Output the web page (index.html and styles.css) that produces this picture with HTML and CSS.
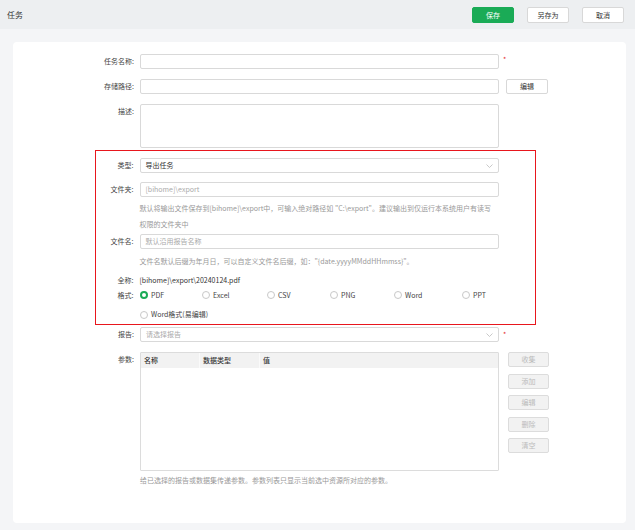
FILE: index.html
```html
<!DOCTYPE html>
<html lang="zh-CN">
<head>
<meta charset="utf-8">
<title>任务</title>
<link rel="stylesheet" href="styles.css">
</head>
<body>
<header class="topbar">
  <div class="title">任务</div>
  <div class="actions">
    <button class="btn btn-primary">保存</button>
    <button class="btn">另存为</button>
    <button class="btn">取消</button>
  </div>
</header>
<main class="card">
  <div class="form">
    <div class="row r-name">
      <span class="lbl">任务名称:</span>
      <div class="field"></div>
      <span class="req req-top">*</span>
    </div>
    <div class="row r-path">
      <span class="lbl">存储路径:</span>
      <div class="field"></div>
      <button class="btn side-btn">编辑</button>
    </div>
    <div class="row r-desc">
      <span class="lbl">描述:</span>
      <div class="field area"></div>
    </div>

    <section class="highlight">
      <div class="row r-type">
        <span class="lbl">类型:</span>
        <div class="field select"><span class="val">导出任务</span>
          <svg class="chev" width="7" height="4" viewBox="0 0 7 4"><polyline points="0.5,0.5 3.5,3.5 6.5,0.5" fill="none" stroke="#bbb" stroke-width="0.8"/></svg>
        </div>
      </div>
      <div class="row r-folder">
        <span class="lbl">文件夹:</span>
        <div class="field"><span class="ph">[bihome]\export</span></div>
      </div>
      <p class="help h-folder">默认将输出文件保存到[bihome]\export中，可输入绝对路径如 "C:\export"。建议输出到仅运行本系统用户有读写<br>权限的文件夹中</p>
      <div class="row r-file">
        <span class="lbl">文件名:</span>
        <div class="field"><span class="ph">默认沿用报告名称</span></div>
      </div>
      <p class="help h-file">文件名默认后缀为年月日，可以自定义文件名后缀，如："{date.yyyyMMddHHmmss}"。</p>
      <div class="row r-full">
        <span class="lbl">全称:</span>
        <span class="text">[bihome]\export\20240124.pdf</span>
      </div>
      <div class="row r-format">
        <span class="lbl">格式:</span>
        <div class="radios">
          <span class="radio on"><i></i>PDF</span>
          <span class="radio"><i></i>Excel</span>
          <span class="radio"><i></i>CSV</span>
          <span class="radio"><i></i>PNG</span>
          <span class="radio"><i></i>Word</span>
          <span class="radio"><i></i>PPT</span>
          <span class="radio wide"><i></i>Word格式(易编辑)</span>
        </div>
      </div>
    </section>

    <div class="row r-report">
      <span class="lbl">报告:</span>
      <div class="field select"><span class="ph">请选择报告</span>
        <svg class="chev" width="7" height="4" viewBox="0 0 7 4"><polyline points="0.5,0.5 3.5,3.5 6.5,0.5" fill="none" stroke="#bbb" stroke-width="0.8"/></svg>
      </div>
      <span class="req">*</span>
    </div>
    <div class="row r-params">
      <span class="lbl">参数:</span>
      <div class="table">
        <div class="thead">
          <span class="c1">名称</span>
          <span class="c2">数据类型</span>
          <span class="c3">值</span>
        </div>
      </div>
      <div class="tbtns">
        <button class="btn dis">收集</button>
        <button class="btn dis">添加</button>
        <button class="btn dis">编辑</button>
        <button class="btn dis">删除</button>
        <button class="btn dis">清空</button>
      </div>
    </div>
    <p class="help h-params">给已选择的报告或数据集传递参数。参数列表只显示当前选中资源所对应的参数。</p>
  </div>
</main>
</body>
</html>
```
FILE: styles.css
```css
* { box-sizing: border-box; }
html, body { margin: 0; padding: 0; }
body {
  background: #f4f5f7;
  font-family: "Noto Sans CJK SC", "Noto Sans", sans-serif;
  font-size: 7px;
  color: #333;
  width: 635px;
  height: 530px;
  overflow: hidden;
}
.topbar {
  height: 29px;
  background: #edeff1;
  display: flex;
  align-items: center;
  justify-content: space-between;
  padding: 0 11px 0 7px;
}
.title { font-size: 8px; color: #333; }
.actions { display: flex; gap: 13px; }
.btn {
  font-family: inherit;
  font-size: 7px;
  width: 42px;
  height: 16px;
  padding: 0;
  border: 1px solid #d8d8d8;
  border-radius: 2px;
  background: #fff;
  color: #333;
  line-height: 14px;
}
.btn-primary { background: #1aab56; border-color: #1aab56; color: #fff; }
.card {
  margin: 13px 9px 0 13px;
  width: 613px;
  height: 481px;
  background: #fff;
  border-radius: 4px;
}
.form { --lw: 121px; padding-top: 12px; }
.row { display: flex; align-items: flex-start; }
.lbl {
  flex: none;
  width: var(--lw);
  margin-right: 6px;
  text-align: right;
  line-height: 15px;
  color: #444;
}
.field {
  flex: none;
  width: 359px;
  height: 15px;
  border: 1px solid #d9d9d9;
  border-radius: 2px;
  background: #fff;
  padding-left: 5px;
  line-height: 13px;
  position: relative;
}
.field.area { height: 44px; }
.ph { color: #aaa; }
.val { color: #333; }
.chev { position: absolute; right: 5px; top: 5px; }
.req { color: #e5262b; font-size: 7px; padding-left: 4px; line-height: 15px; }
.req-top { line-height: 7px; padding-top: 2px; }
.side-btn { margin-left: 7px; height: 15px; width: 42px; line-height: 13px; }
.r-name { margin-bottom: 10px; }
.r-path { margin-bottom: 10px; }
.r-desc { margin-bottom: 2px; }

.highlight {
  --lw: 37.5px;
  margin-left: 82px;
  width: 441px;
  border: 1.6px solid #e8161d;
  padding: 6.5px 0 1.5px 0;
}
.r-type { margin-bottom: 9px; }
.r-folder { margin-bottom: 3px; }
.help {
  margin: 0 0 0 calc(var(--lw) + 6px);
  color: #999;
  line-height: 16px;
}
.h-folder { margin-bottom: 2px; }
.r-file { margin-bottom: 4px; }
.h-file { margin-bottom: 3px; }
.r-full .lbl, .r-full .text { line-height: 16px; }
.r-full .text { color: #333; }
.radios {
  display: grid;
  grid-template-columns: 62px 65px 63px 64px 68px auto;
  row-gap: 4.5px;
  line-height: 15px;
}
.radio { display: flex; align-items: center; color: #444; white-space: nowrap; }
.radio.wide { grid-column: 1 / -1; }
.radio i {
  flex: none;
  display: inline-block;
  width: 8px;
  height: 8px;
  border: 1px solid #c8c8c8;
  border-radius: 50%;
  margin-right: 3.5px;
  background: #fff;
}
.radio.on i { border: 2.2px solid #1aab56; }

.r-report { margin-top: 2.5px; margin-bottom: 10px; }
.table {
  flex: none;
  width: 359px;
  height: 119px;
  border: 1px solid #dcdcdc;
  border-radius: 1px;
}
.thead {
  display: flex;
  height: 15px;
  background: #f2f2f2;
  line-height: 15px;
  color: #333;
  font-weight: 500;
}
.thead span { padding-left: 3px; }
.thead .c1 { width: 59px; border-right: 1px solid #fafafa; }
.thead .c2 { width: 60px; border-right: 1px solid #fafafa; }
.tbtns {
  display: flex;
  flex-direction: column;
  gap: 6.5px;
  margin-left: 9px;
}
.tbtns .btn { width: 41px; height: 15px; line-height: 13px; }
.btn.dis { background: #f2f2f2; border-color: #dcdcdc; color: #bbb; }
.h-params { margin-top: 1px; }
```
